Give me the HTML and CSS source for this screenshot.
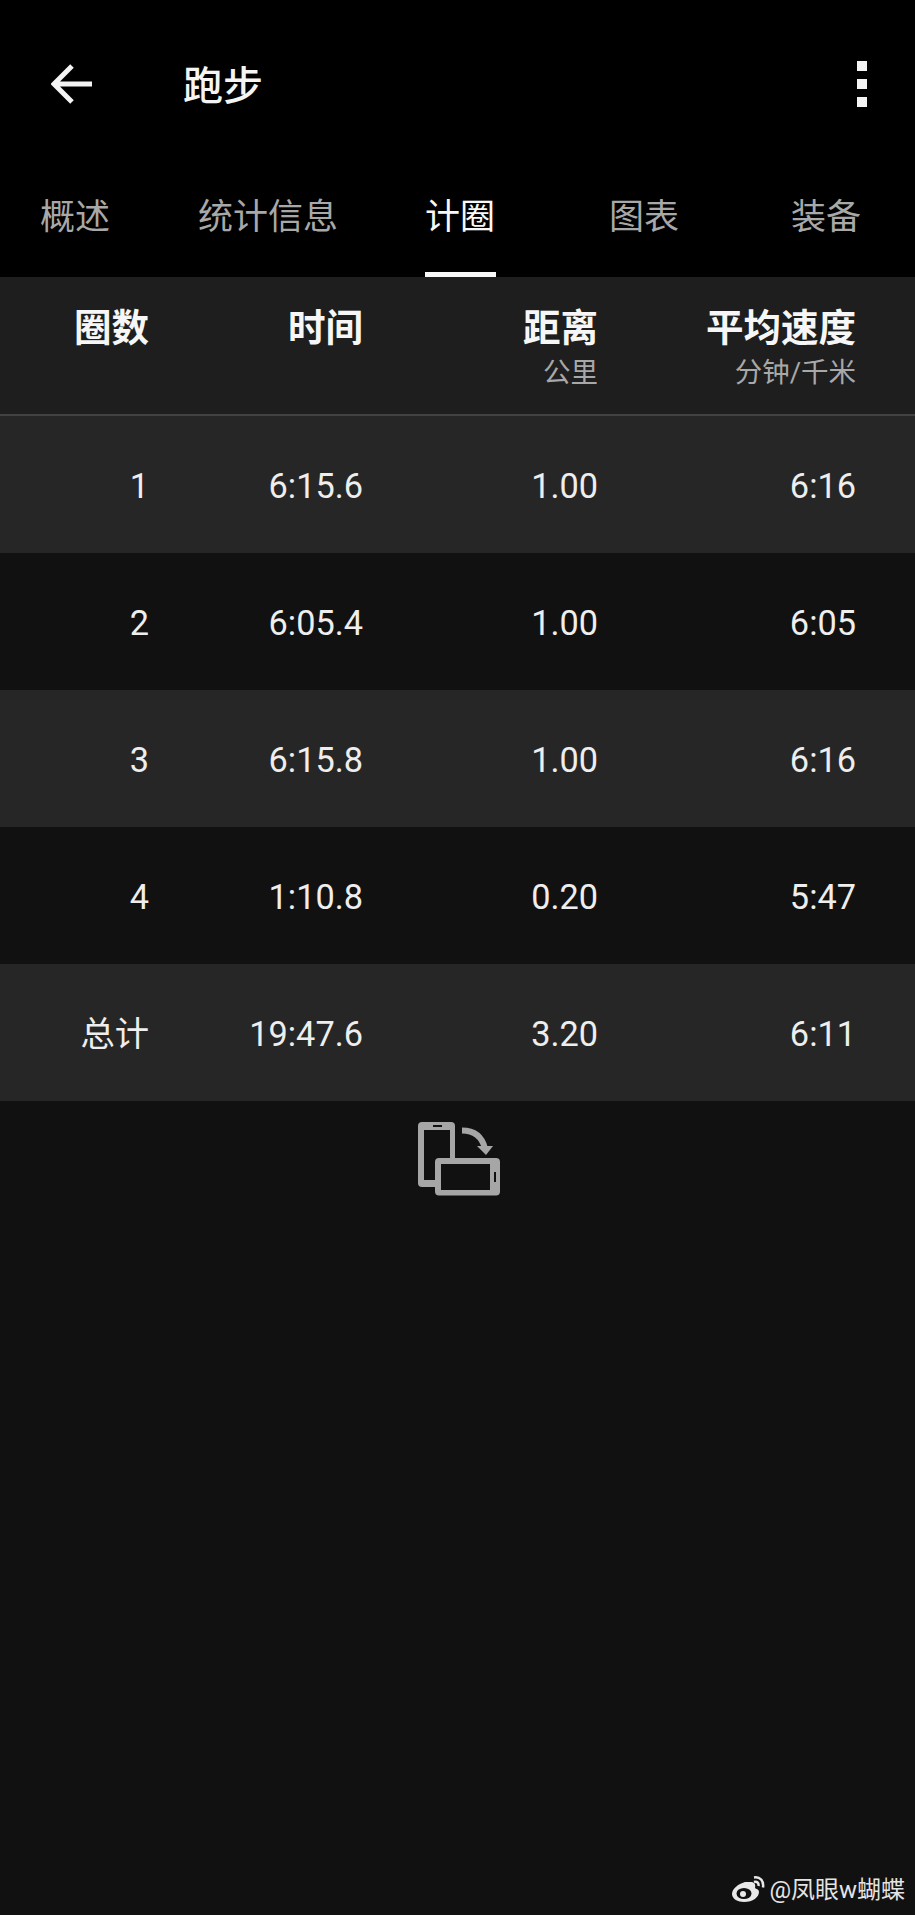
FILE: index.html
```html
<!DOCTYPE html>
<html lang="zh">
<head>
    <meta charset="UTF-8">
    <meta name="viewport" content="width=device-width, initial-scale=1.0">
    <title>跑步</title>

    <link rel="stylesheet" href="styles.css">

</head>
<body>

    <div class="page">
        <header class="top">
            <div class="appbar">
                <svg class="back" width="42" height="40" viewBox="0 0 42 40">
                    <path d="M41 20H4M21 2L3 20l18 18" fill="none" stroke="#f4f4f4" stroke-width="5"/>
                </svg>
                <h1>跑步</h1>
                <div class="menu"><span></span><span></span><span></span></div>
            </div>

            <!-- Tabs -->
            <nav class="tabs">
                <div class="tab">概述</div>
                <div class="tab">统计信息</div>
                <div class="tab active">计圈</div>
                <div class="tab">图表</div>
                <div class="tab">装备</div>
            </nav>
        </header>

        <!-- Lap table -->
        <div class="row head">
            <div class="cell"><b>圈数</b></div>
            <div class="cell"><b>时间</b></div>
            <div class="cell"><b>距离</b><small>公里</small></div>
            <div class="cell"><b>平均速度</b><small>分钟/千米</small></div>
        </div>
        <div class="row odd">
            <div class="cell">1</div>
            <div class="cell">6:15.6</div>
            <div class="cell">1.00</div>
            <div class="cell">6:16</div>
        </div>
        <div class="row">
            <div class="cell">2</div>
            <div class="cell">6:05.4</div>
            <div class="cell">1.00</div>
            <div class="cell">6:05</div>
        </div>
        <div class="row odd">
            <div class="cell">3</div>
            <div class="cell">6:15.8</div>
            <div class="cell">1.00</div>
            <div class="cell">6:16</div>
        </div>
        <div class="row">
            <div class="cell">4</div>
            <div class="cell">1:10.8</div>
            <div class="cell">0.20</div>
            <div class="cell">5:47</div>
        </div>
        <div class="row odd">
            <div class="cell">总计</div>
            <div class="cell">19:47.6</div>
            <div class="cell">3.20</div>
            <div class="cell">6:11</div>
        </div>

        <svg class="rotate" width="82" height="74" viewBox="0 0 82 74">
            <!-- upright phone -->
            <rect x="0" y="0" width="37" height="65" rx="4" fill="#a6a6a6"/>
            <rect x="6" y="8" width="26" height="50" fill="#111"/>
            <rect x="15" y="3" width="9" height="2" fill="#111"/>
            <!-- phone on its side -->
            <rect x="17" y="36" width="65" height="37.500" rx="4" fill="#a6a6a6"/>
            <rect x="23" y="42" width="49" height="26" fill="#111"/>
            <rect x="76" y="50" width="2" height="10" fill="#111"/>
            <!-- arrow -->
            <path d="M44 8.500c12 0 20 6 23 18" fill="none" stroke="#a6a6a6" stroke-width="6"/>
            <path d="M59 24h16l-7 9z" fill="#a6a6a6"/>
        </svg>

        <footer class="mark">
            <svg width="33" height="26" viewBox="0 0 33 26">
                <path d="M13 6C6 8 0 13 0 18c0 5 6 8 12 8 9 0 15-5 15-10 0-3-3-3-4-4 1-4-1-6-4-6-2 0-4 0-6 0z" fill="#e8e8e8"/>
                <ellipse cx="12" cy="17.500" rx="7.500" ry="5.500" fill="#111"/>
                <circle cx="11" cy="18" r="3" fill="#e8e8e8"/>
                <path d="M22 1.500c6-1 10 3 9 10M22 6c3-1 5 1 4.500 4" fill="none" stroke="#e8e8e8" stroke-width="2.500"/>
            </svg>
            <span class="mark-name">@凤眼w蝴蝶</span>
        </footer>
    </div>

</body>
</html>
```

FILE: styles.css
```css
body {
    margin: 0;
    background-color: #111;
    color: #f4f4f4;
    font-family: Roboto, "Noto Sans CJK SC", sans-serif;
}

.page {
    height: 1915px;
    display: flex;
    flex-direction: column;
    overflow: hidden;
}

.top {
    background-color: #000;
    height: 277px;
    flex: none;
}

.appbar {
    height: 168px;
    display: flex;
    align-items: center;
    padding-left: 51px;
    padding-right: 48px;
}

.back {
    flex: none;
}

h1 {
    margin: 0 0 2px 90px;
    font-size: 40px;
    font-weight: 500;
    flex: 1;
}

.menu {
    display: flex;
    flex-direction: column;
    gap: 8px;
}

.menu span {
    width: 10px;
    height: 10px;
    background-color: #f4f4f4;
}

.tabs {
    display: flex;
    height: 109px;
    padding-left: 40px;
}

.tab {
    font-size: 35px;
    line-height: 100px;
    color: #a8a8a8;
    margin-right: 88px;
}

.tab.active {
    color: #f8f8f8;
    height: 104px;
    padding-right: 1px;
    margin-left: -1px;
    margin-right: 113px;
    border-bottom: 5px solid #f8f8f8;
}

.tab.active + .tab {
    margin-right: 112px;
}

.tab:last-child {
    margin-right: 0;
}

.row {
    display: grid;
    grid-template-columns: 149px 214px 235px 258px;
    height: 137px;
    box-sizing: border-box;
    padding-top: 2px;
    align-items: center;
    flex: none;
    font-size: 34.300px;
    line-height: 40px;
    color: #eee;
}

.row.odd {
    background-color: #262626;
}

.row.head {
    height: 139px;
    padding-top: 26px;
    align-items: start;
    background-color: #1e1e1e;
    border-bottom: 2px solid #424242;
}

.cell {
    text-align: right;
}

.cell b {
    display: block;
    font-size: 37.500px;
    line-height: 50px;
    color: #f6f6f6;
}

.cell small {
    display: block;
    margin-top: 3px;
    font-size: 27.500px;
    line-height: 34px;
    color: #a8a8a8;
}

.rotate {
    flex: none;
    margin: 21px 0 0 418px;
}

.mark {
    margin-top: auto;
    margin-bottom: 11px;
    margin-right: 10px;
    display: flex;
    align-items: center;
    justify-content: flex-end;
    gap: 4px;
    font-size: 24px;
    line-height: 28px;
    color: #e4e4e4;
}

.mark-name {
    padding-top: 3px;
}
```
